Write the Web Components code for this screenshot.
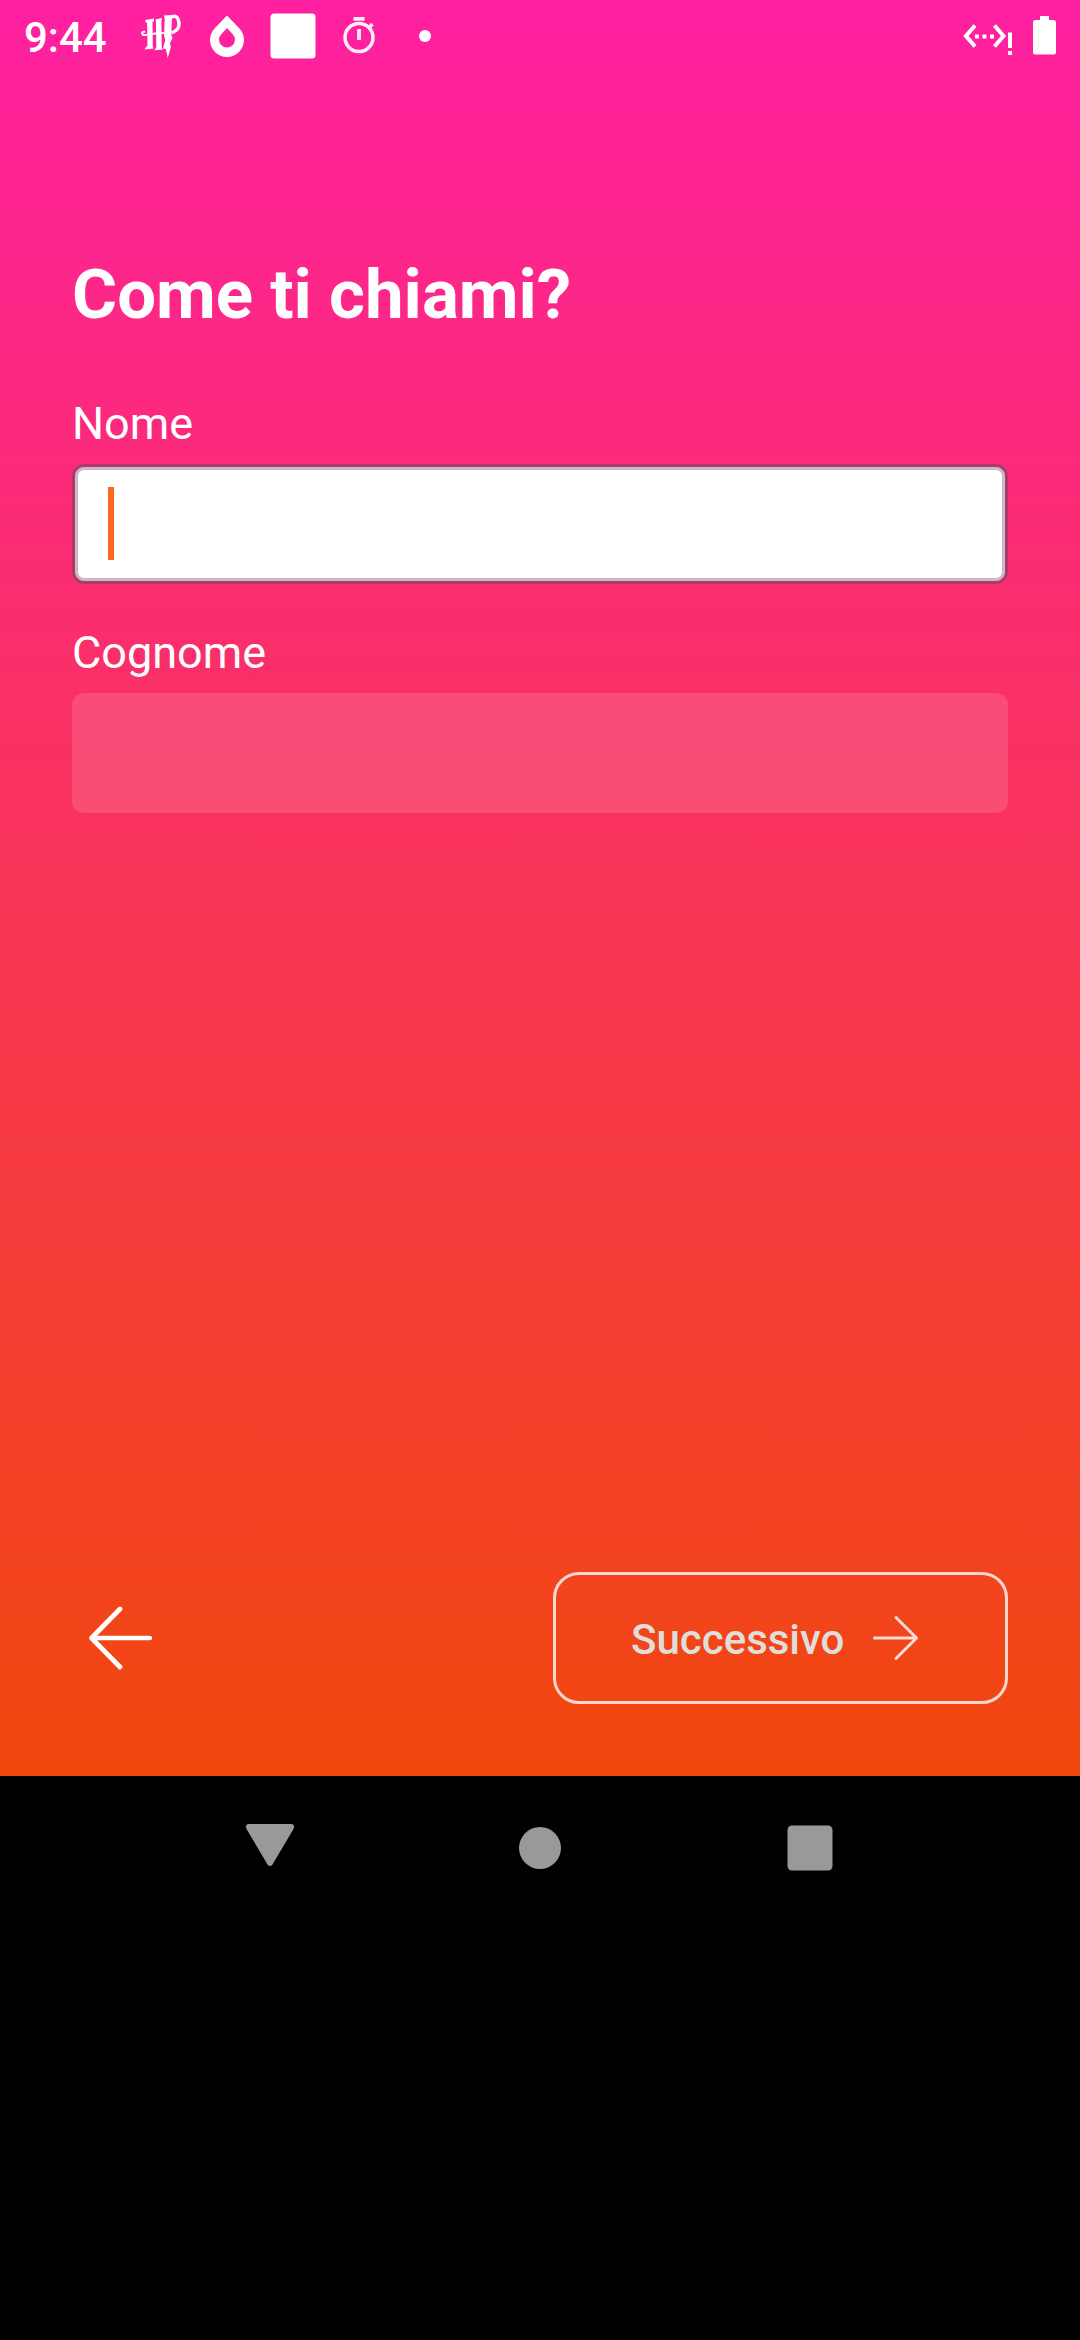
<!DOCTYPE html>
<html lang="it">
<head>
<meta charset="utf-8">
<title>Come ti chiami?</title>
<style>
html,body{margin:0;background:#000}
</style>
</head>
<body>
<name-screen></name-screen>
<script>
const define = (name, html) => customElements.define(name, class extends HTMLElement {
  constructor() {
    super();
    const t = document.createElement('template');
    t.innerHTML = html;
    this.attachShadow({mode: 'open'}).appendChild(t.content.cloneNode(true));
  }
});

define('status-bar', `
<style>
:host{display:flex;height:72px;box-sizing:border-box;padding:0 22px 0 24px;justify-content:space-between;color:#fff;font:500 42px/72px Roboto,sans-serif}
.side{display:flex}
svg{display:block;flex:none;overflow:visible}
.time{width:108px;padding-top:2px;height:70px;line-height:72px}
</style>
<div class="side">
  <div class="time">9:44</div>
  <svg width="303" height="72" viewBox="132 0 303 72" fill="#fff">
    <g>
      <path d="M145.500 20L154 18.500L154 21L152.500 22L152.800 47L153.800 48.500L144.500 49.500L146.500 46.500L147.500 46L147.100 22.500L145.500 22.500Z"/>
      <path d="M155.500 19.500L162 18L161.400 20.500L161.700 47.500L163 49.500L154.500 50.200L156.300 47.500L156 22Z"/>
      <path d="M145 32C140.500 31 141.500 35.500 145.500 35C151 34.500 156 32.500 164 33" fill="none" stroke="#fff" stroke-width="2"/>
      <path d="M163.800 15.500L172 15L171.300 35L172.500 38L170 43L170.800 47L167.800 58L165.800 49L163 48.500L165.300 40L164 35L164.800 19Z"/>
      <path d="M171 17.500C173 15.800 176 15.800 177.500 18C179.500 22 179.500 26 177.500 29C176 31 174 32 171.500 33" fill="none" stroke="#fff" stroke-width="3.400"/>
    </g>
    <path fill-rule="evenodd" d="M227 15.500L239 28C242.500 31.700 244 35.500 244 40A17 17 0 0 1 210 40C210 35.500 211.500 31.700 215 28ZM227 28L221.500 34C219.800 36 219 37.600 219 39.500A8 8 0 0 0 235 39.500C235 37.600 234.200 36 232.500 34Z"/>
    <rect x="270.500" y="13.500" width="45" height="45" rx="3.500"/>
    <g opacity=".92">
      <rect x="353.500" y="17" width="11" height="3.700"/>
      <circle cx="359" cy="37.500" r="14" fill="none" stroke="#fff" stroke-width="3.500"/>
      <rect x="357.100" y="29" width="3.800" height="11"/>
      <path d="M369 27.500L372.500 24" stroke="#fff" stroke-width="3.500"/>
    </g>
    <circle cx="425" cy="36" r="6"/>
  </svg>
</div>
<svg width="98" height="72" viewBox="960 0 98 72" fill="#fff">
  <path d="M975 25.500L966 36L975 46.500M994.500 25.500L1003.500 36L994.500 46.500" fill="none" stroke="#fff" stroke-width="4"/>
  <path d="M975 34.500h4v4h-4zM982.500 34.500h4v4h-4zM990 34.500h4v4h-4zM1008 32.500h4v15.500h-4zM1008 51h4v4h-4z"/>
  <path d="M1040 16h9v4h4.500a2.500 2.500 0 0 1 2.500 2.500v29.500a2.500 2.500 0 0 1-2.500 2.500h-18a2.500 2.500 0 0 1-2.500-2.500v-29.500a2.500 2.500 0 0 1 2.500-2.500h4.500z"/>
</svg>`);

define('text-field', `
<style>
:host{display:flex;flex-direction:column;color:#fff;font:400 45px/54px Roboto,sans-serif}
.label{height:54px;padding-top:1px;margin-bottom:13px}
.box{height:120px;box-sizing:border-box;border-radius:12px;background:rgba(255,255,255,.135);display:flex;align-items:center;padding-left:36px}
.caret{display:none;width:6px;height:73px;margin-bottom:1px;background:#ff671f}
:host([focused]) .box{background:#fff;border:3px solid #b0396b;box-shadow:inset 0 0 0 3px #cbbac2;padding-left:33px}
:host([focused]) .caret{display:block}
</style>
<div class="label"><slot></slot></div>
<div class="box"><div class="caret"></div></div>`);

define('back-arrow', `
<style>:host{display:block}svg{display:block}</style>
<svg width="80" height="80" viewBox="72 1598 80 80" fill="none" stroke="#fff" stroke-width="4.700" stroke-linecap="round" stroke-linejoin="round"><path d="M149.700 1638H91.500M120 1609L91.500 1638L120 1667"/></svg>`);

define('next-button', `
<style>
:host{display:flex;box-sizing:border-box;width:455px;height:132px;border:3px solid #f8d7cf;border-radius:26px;align-items:center;padding-left:75px;color:#e0dedb;font:500 42px/50px Roboto,sans-serif}
.t{width:217px;margin-top:4px;flex:none}
svg{display:block;margin-left:24px}
</style>
<div class="t"><slot></slot></div>
<svg width="48" height="48" viewBox="872 1614 48 48" fill="none" stroke="#f5dcd5" stroke-width="3" stroke-linecap="round" stroke-linejoin="round"><path d="M874.500 1638H916.500M896 1617.500L916.500 1638L896 1658.500"/></svg>`);

define('nav-bar', `
<style>:host{display:flex;height:144px;background:#000;padding:0 135px}div{flex:1;display:flex;justify-content:center;align-items:center}svg{display:block;fill:#999}.back{padding-bottom:5px}</style>
<div class="back"><svg width="50" height="43" viewBox="245 1824 50 43"><path d="M249 1824H291Q295.500 1824.500 293.500 1829L272.500 1864.500Q270 1867.500 267.500 1864.500L246.500 1829Q244.500 1824.500 249 1824Z"/></svg></div>
<div><svg width="42" height="42" viewBox="0 0 42 42"><circle cx="21" cy="21" r="21"/></svg></div>
<div><svg width="46" height="46" viewBox="0 0 46 46"><rect x=".5" y=".5" width="45" height="45" rx="4.500"/></svg></div>`);

define('name-screen', `
<style>
:host{display:flex;flex-direction:column;width:1080px;height:2340px;background:#000;font-family:Roboto,sans-serif}
main{height:1776px;display:flex;flex-direction:column;background:linear-gradient(#ff20a1,#f1480d)}
.content{flex:1;padding:182px 72px 72px;display:flex;flex-direction:column}
h1{margin:0 0 60px;font:700 69px/82px Roboto,sans-serif;color:#fff}
text-field + text-field{margin-top:41px}
footer{margin-top:auto;display:flex;justify-content:space-between;align-items:center}
</style>
<main>
  <status-bar></status-bar>
  <div class="content">
    <h1>Come ti chiami?</h1>
    <text-field focused>Nome</text-field>
    <text-field>Cognome</text-field>
    <footer><back-arrow></back-arrow><next-button>Successivo</next-button></footer>
  </div>
</main>
<nav-bar></nav-bar>`);
</script>
</body>
</html>
